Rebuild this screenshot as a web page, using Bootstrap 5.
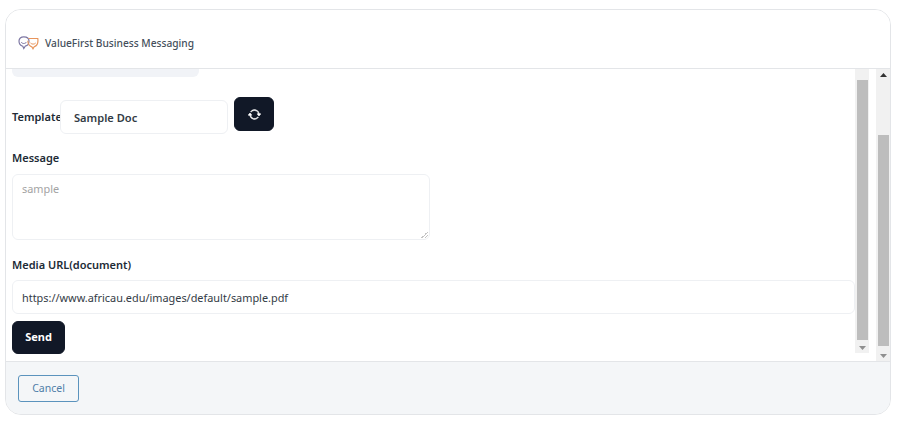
<!DOCTYPE html>
<html lang="en">
<head>
<meta charset="utf-8">
<title>ValueFirst Business Messaging</title>
<link href="https://cdn.jsdelivr.net/npm/bootstrap@5.3.0/dist/css/bootstrap.min.css" rel="stylesheet">
<style>
html,body{height:423px;overflow:hidden;background:#fff;font-family:"Noto Sans",sans-serif;color:#212b36}
.shell{padding:9px 9px 8px 5px;height:423px}
.vf-card{height:406px;border:1px solid #e3e5e8;border-radius:16px;overflow:hidden;background:#fff}
.vf-head{height:59px;flex:0 0 59px;background:#fff;border-bottom:1px solid #e3e5e8;padding:10px 0 0 12px;gap:6px;border-radius:0;font-size:10.2px;font-weight:500;color:#454f5b}
.vf-logo{margin-bottom:3px}
.vf-body{height:292px;flex:0 0 292px;min-height:0}
.vf-content{flex:1 1 auto;padding-left:6px;min-width:0}
.clip-box{width:187px;height:8px;background:#f1f3f7;border-radius:0 0 6px 6px;margin-bottom:20px}
.tpl-row{height:37px;margin-bottom:15px}
.vf-label{font-size:11px;font-weight:600;color:#212b36;margin:0;line-height:17px}
.tpl-label{margin-top:11px;width:48px;flex:0 0 48px;white-space:nowrap}
.vf-input{border:1px solid #eef0f3;border-radius:6px;background:#fff;box-shadow:none;font-size:10.9px;color:#333b45;padding:0 9px}
.tpl-select{width:168px;height:34px;margin-top:3px;font-size:11.1px;font-weight:600;padding-left:13px}
.dark-btn{background:#111827;color:#fff;border:1px solid #111827;border-radius:6px;font-size:11px;font-weight:700;padding:0;height:34px}
.dark-btn:hover{background:#111827;color:#fff}
.refresh-btn{width:40px;margin-left:6px}
.msg-label{margin-bottom:8px}
.msg-area{width:418px;height:66px;padding:6px 9px;margin-bottom:16px;color:#a3a3a3}
.msg-area::placeholder{color:#a3a3a3}
.msg-area::-webkit-resizer{background:linear-gradient(135deg,transparent 50%,#c4c4c4 50%,#c4c4c4 58%,transparent 58%,transparent 72%,#c4c4c4 72%,#c4c4c4 80%,transparent 80%) no-repeat right 1px bottom 1px/7px 7px}
.url-label{margin-bottom:7px}
.url-input{width:843px;height:34px;margin-bottom:7px}
.send-btn{width:53px;height:33px}
.track{flex:0 0 14px;background:#f1f1f1;display:flex;flex-direction:column;align-items:center}
.inner-track{height:284px}
.outer-track{height:292px;margin-left:7px}
.arrow-box{height:11px;display:flex;align-items:center;justify-content:center;flex:0 0 auto}
.thumb{width:11px;background:#bdbdbd}
.inner-thumb{height:260px;margin-bottom:2px}
.outer-spacer{height:55px}
.outer-thumb{height:211px;width:11px}
.outer-fill{flex:1 1 auto}
.vf-foot{height:53px;flex:0 0 53px;background:#f4f6f8;border-top:1px solid #e3e5e8;padding:13px 0 0 12px;border-radius:0}
.cancel-btn{width:61px;height:27px;padding:0;font-size:10.5px;color:#4f7ea8;border:1px solid #5b93bd;border-radius:3px;background:transparent}
</style>
</head>
<body>
<div class="shell">
  <div class="card vf-card">
    <div class="card-header vf-head d-flex align-items-center">
      <svg class="vf-logo" width="21" height="14" viewBox="0 0 21 14" fill="none" aria-hidden="true">
        <path d="M1 5C1 2.500 2.800.8 5.800.8S11 2.500 11 5c0 2.800-1.800 4.800-3.800 5.200L5.800 12.500l-1-2.300C2.500 9.500 1 7.500 1 5z" stroke="#7d77a3" stroke-width="1.200"/>
        <path d="M3.200 6c1 2 4 2 5.300 0" stroke="#7d77a3" stroke-width="1"/>
        <path d="M10.500 2.500h9.300c.5 3.800-.6 7.300-3.600 8.300l-1.200 2-1.200-2c-2.300-.6-3.800-3.300-4-6" stroke="#e8955c" stroke-width="1.200"/>
        <path d="M12.500 7c1.500 1.500 3.600 1.500 5.200 0" stroke="#e8955c" stroke-width="1"/>
      </svg>
      <span>ValueFirst Business Messaging</span>
    </div>
    <div class="card-body vf-body d-flex p-0">
      <div class="vf-content">
        <div class="clip-box"></div>
        <div class="d-flex align-items-start tpl-row">
          <label class="vf-label tpl-label">Template</label>
          <input class="form-control vf-input tpl-select" value="Sample Doc" readonly>
          <button class="btn dark-btn refresh-btn d-flex align-items-center justify-content-center" type="button" aria-label="Refresh">
            <svg width="13" height="13" viewBox="0 0 16 16" fill="#fff" stroke="#fff" stroke-width=".7" aria-hidden="true">
              <path d="M11.534 7h3.932a.25.25 0 0 1 .192.41l-1.966 2.360a.25.25 0 0 1-.384 0l-1.966-2.360a.25.25 0 0 1 .192-.41zm-11 2h3.932a.25.25 0 0 0 .192-.41L2.692 6.230a.25.25 0 0 0-.384 0L.342 8.590A.25.25 0 0 0 .534 9z"/>
              <path d="M8 3c-1.552 0-2.940.707-3.857 1.818a.5.5 0 1 1-.771-.636A6.002 6.002 0 0 1 13.917 7H12.900A5.002 5.002 0 0 0 8 3zM3.100 9a5.002 5.002 0 0 0 8.757 2.182.5.5 0 1 1 .771.636A6.002 6.002 0 0 1 2.083 9H3.100z"/>
            </svg>
          </button>
        </div>
        <label class="vf-label d-block msg-label">Message</label>
        <textarea class="form-control vf-input msg-area d-block" placeholder="sample"></textarea>
        <label class="vf-label d-block url-label">Media URL(document)</label>
        <input class="form-control vf-input url-input" value="https://www.africau.edu/images/default/sample.pdf" readonly>
        <button class="btn dark-btn send-btn" type="button">Send</button>
      </div>
      <div class="track inner-track">
        <div class="arrow-box"></div>
        <div class="thumb inner-thumb"></div>
        <div class="arrow-box"><svg width="7" height="4" viewBox="0 0 7 4" aria-hidden="true"><polygon points="0,0 7,0 3.500,4" fill="#8f8f8f"/></svg></div>
      </div>
      <div class="track outer-track">
        <div class="arrow-box"><svg width="7" height="4" viewBox="0 0 7 4" aria-hidden="true"><polygon points="0,4 7,4 3.500,0" fill="#333"/></svg></div>
        <div class="outer-spacer"></div>
        <div class="thumb outer-thumb"></div>
        <div class="outer-fill"></div>
        <div class="arrow-box"><svg width="7" height="4" viewBox="0 0 7 4" aria-hidden="true"><polygon points="0,0 7,0 3.500,4" fill="#8f8f8f"/></svg></div>
      </div>
    </div>
    <div class="card-footer vf-foot">
      <button class="btn cancel-btn" type="button">Cancel</button>
    </div>
  </div>
</div>
<script src="https://cdn.jsdelivr.net/npm/bootstrap@5.3.0/dist/js/bootstrap.bundle.min.js"></script>
</body>
</html>
